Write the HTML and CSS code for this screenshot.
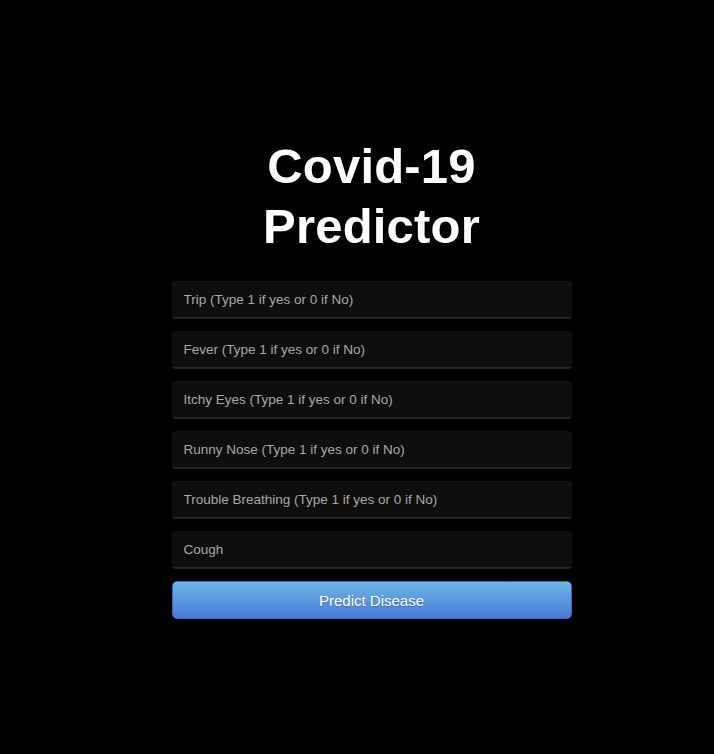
FILE: index.html
```html
<!DOCTYPE html>
<html>
<head>
<meta charset="utf-8">
<link rel="stylesheet" href="styles.css">
</head>
<body>
<main class="page">
  <div class="login">
    <h1 class="title">Covid-19<br>Predictor</h1>
    <form class="form">
      <input class="field" type="text" placeholder="Trip (Type 1 if yes or 0 if No)">
      <input class="field" type="text" placeholder="Fever (Type 1 if yes or 0 if No)">
      <input class="field" type="text" placeholder="Itchy Eyes (Type 1 if yes or 0 if No)">
      <input class="field" type="text" placeholder="Runny Nose (Type 1 if yes or 0 if No)">
      <input class="field" type="text" placeholder="Trouble Breathing (Type 1 if yes or 0 if No)">
      <input class="field" type="text" placeholder="Cough">
      <button class="btn" type="button">Predict Disease</button>
    </form>
  </div>
</main>
</body>
</html>
```

FILE: styles.css
```css
html, body {
  margin: 0;
  padding: 0;
  background: #000;
  height: 100%;
}
body {
  font-family: "Liberation Sans", Arial, sans-serif;
}
.page {
  padding-left: 29px;
  padding-top: 136px;
}
.login {
  width: 400px;
  margin: 0 auto;
}
.title {
  margin: 0 0 25px;
  color: #fff;
  font-size: 49px;
  line-height: 60px;
  font-weight: bold;
  text-align: center;
  letter-spacing: 0.2px;
}
.form {
  display: flex;
  flex-direction: column;
  gap: 12px;
}
.field {
  box-sizing: border-box;
  width: 400px;
  height: 38px;
  margin: 0;
  padding: 0 11px;
  background: #0e0e0e;
  border: 1px solid #111;
  border-bottom: 2px solid #252525;
  border-radius: 4px;
  color: #ddd;
  font-family: "Liberation Sans", Arial, sans-serif;
  font-size: 13.5px;
  outline: none;
}
.field::placeholder {
  color: #a8a8a8;
}
.btn {
  box-sizing: border-box;
  width: 400px;
  height: 38px;
  margin: 0;
  padding: 0;
  border: 1px solid #3a62c2;
  border-radius: 5px;
  background: linear-gradient(to bottom, #6eb6e4, #4a7ad6);
  color: #fff;
  font-family: "Liberation Sans", Arial, sans-serif;
  font-size: 15px;
  text-shadow: 0 1px 1px rgba(0,0,0,0.25);
  cursor: pointer;
}
```
